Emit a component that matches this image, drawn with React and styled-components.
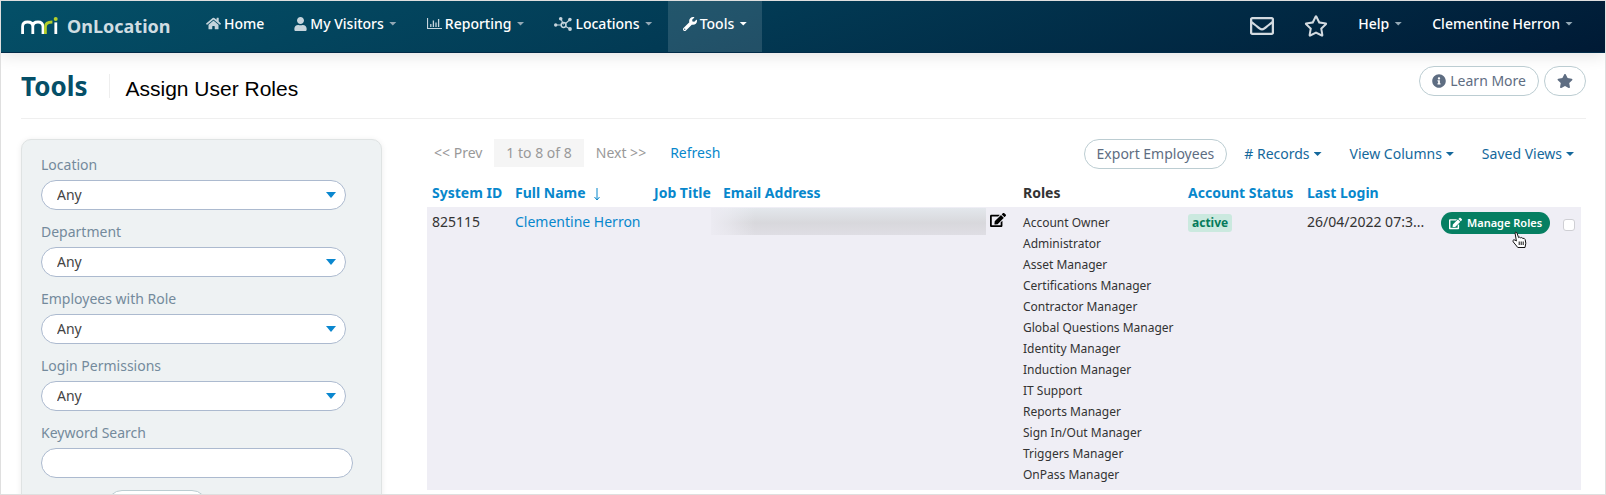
import React from "react";
import styled, { createGlobalStyle, css } from "styled-components";
import {
  FaHome,
  FaUser,
  FaWrench,
  FaRegEnvelope,
  FaRegStar,
  FaStar,
  FaInfoCircle,
  FaEdit,
} from "react-icons/fa";

const GlobalStyle = createGlobalStyle`
  *, *::before, *::after { box-sizing: border-box; }
  body {
    margin: 0;
    background: #fff;
    color: #333;
    font: 14px/20px "Noto Sans", "Open Sans", sans-serif;
  }
  button, input, select { font: inherit; }
  a { text-decoration: none; }
`;

const Page = styled.div`
  height: 100vh;
  overflow: hidden;
  border: 1px solid #dfdfdf;
`;

const NavBar = styled.header`
  display: flex;
  align-items: stretch;
  height: 52px;
  padding: 0 17px 0 20px;
  background: linear-gradient(160deg, #045068 0%, #023a54 45%, #001a35 100%);
  border-bottom: 1px solid #022c49;
  box-shadow: 0 2px 16px rgba(0, 0, 0, 0.12);
`;

const Brand = styled.a`
  display: flex;
  align-items: center;
  gap: 9px;
  width: 170px;
  padding-bottom: 2px;
  color: #d0dde2;
  font-size: 18px;
  font-weight: 700;
`;

const Menu = styled.nav`
  display: flex;
  flex: 1;
`;

const UserMenu = styled.div`
  display: flex;
`;

const NavItem = styled.button`
  display: flex;
  align-items: center;
  gap: 3px;
  padding: 0 15px 6px;
  border: 0;
  color: #fff;
  font-weight: 500;
  white-space: nowrap;
  background: ${(p) => (p.$active ? "rgba(255, 255, 255, 0.13)" : "transparent")};
  svg { color: ${(p) => (p.$active ? "#fff" : "#c6d4dc")}; }
`;

const UserIcon = styled(FaUser)`
  width: 13px;
  height: 14px;
`;

const IconLink = styled.a`
  display: flex;
  align-items: center;
  padding: 0 15px 2px;
  color: #d3dae0;
`;

const Caret = styled.span`
  width: 8px;
  height: 4px;
  margin-left: ${(p) => p.$gap || 0}px;
  background: ${(p) => p.$color || "#93a8b5"};
  clip-path: polygon(0 0, 100% 0, 50% 100%);
`;

const TitleBar = styled.div`
  display: flex;
  align-items: center;
  margin: 0 19px 0 20px;
  height: 66px;
  border-bottom: 1px solid #efefef;
`;

const Section = styled.h1`
  margin: 0;
  padding-right: 22px;
  border-right: 1px solid #eee;
  color: #054f68;
  font-size: 26px;
  line-height: 24px;
  font-weight: 700;
`;

const PageTitle = styled.h2`
  flex: 1;
  margin: 0;
  padding: 6px 0 0 15px;
  color: #000;
  font: 400 21px/24px "Liberation Sans", Arial, sans-serif;
`;

const Actions = styled.div`
  display: flex;
  gap: 5px;
  padding-bottom: 10px;
`;

const PillButton = styled.button`
  display: flex;
  align-items: center;
  justify-content: center;
  gap: 4px;
  height: 30px;
  padding: 0 12px;
  border: 1px solid #bccdd2;
  border-radius: 15px;
  background: #fff;
  color: #5e6d82;
  white-space: nowrap;
`;

const Body = styled.main`
  display: flex;
  align-items: flex-start;
  gap: 45px;
  padding: 20px 24px 0 20px;
`;

const Filters = styled.form`
  flex: 0 0 361px;
  padding: 15px 19px 24px;
  border: 1px solid #dfe3e3;
  border-radius: 10px;
  background: #eef2f3;
  box-shadow: 0 1px 6px rgba(0, 0, 0, 0.08);
`;

const Field = styled.div`
  display: flex;
  flex-direction: column;
  gap: 5px;
  margin-bottom: 12px;
  label { color: #748a9c; }
`;

const control = css`
  height: 30px;
  padding: 0 15px;
  border: 1px solid #acbacf;
  border-radius: 15px;
  background: #fff;
  color: #444;
`;

const SelectWrap = styled.div`
  display: grid;
  align-items: center;
  width: 305px;
  > * { grid-area: 1 / 1; }
  > span {
    justify-self: end;
    width: 10px;
    height: 6px;
    margin-right: 10px;
    background: #0a87cf;
    clip-path: polygon(0 0, 100% 0, 50% 100%);
    pointer-events: none;
  }
`;

const Select = styled.select`
  ${control}
  width: 100%;
  appearance: none;
`;

const TextInput = styled.input`
  ${control}
  width: 312px;
`;

const FilterActions = styled.div`
  display: flex;
  padding-left: 66px;
  button { width: 100px; }
`;

const Results = styled.section`
  flex: 1;
  min-width: 0;
`;

const Toolbar = styled.div`
  display: flex;
  align-items: center;
  justify-content: space-between;
  height: 30px;
`;

const Pager = styled.div`
  display: flex;
  align-items: center;
  gap: 12px;
  padding: 0 0 2px 7px;
  color: #999;
`;

const PageCount = styled.span`
  padding: 4px 12px;
  background: #f5f5f5;
`;

const BlueLink = styled.a`
  color: #0787cc;
  margin-left: ${(p) => p.$indent || 0}px;
`;

const DropTools = styled.div`
  display: flex;
  align-items: center;
  padding-right: 7px;
`;

const DropButton = styled.button`
  display: flex;
  align-items: center;
  gap: 4px;
  margin-left: ${(p) => p.$gap}px;
  padding: 0;
  border: 0;
  background: none;
  color: #14689c;
  white-space: nowrap;
`;

const Table = styled.table`
  width: 100%;
  margin-top: 9px;
  border-collapse: collapse;
  table-layout: fixed;
  th {
    padding: 5px 0 4px 5px;
    text-align: left;
    font-weight: 700;
    white-space: nowrap;
  }
  td {
    padding: 5px 0 0 5px;
    vertical-align: top;
    white-space: nowrap;
    background: #efeef5;
  }
`;

const SortArrow = styled.svg`
  margin-left: 7px;
  vertical-align: -3px;
`;

const EmailCell = styled.div`
  display: flex;
  gap: 4px;
  margin: -4px 0 0 -12px;
  button {
    display: flex;
    padding: 4px 0 0;
    border: 0;
    background: none;
    color: #000;
  }
`;

const Redacted = styled.span`
  flex: 0 0 275px;
  height: 27px;
  background:
    linear-gradient(90deg, #ecebf2 0, rgba(239, 238, 245, 0.6) 16px, transparent 44px),
    linear-gradient(#e3e7ec 0, #d8d8dc 55%, #dfdee4 100%);
`;

const RoleList = styled.ul`
  margin: 0;
  padding: 0 0 5px;
  list-style: none;
  font-size: 12px;
  line-height: 21px;
`;

const Status = styled.span`
  display: inline-block;
  padding: 0 4px;
  border-radius: 3px;
  background: #cbe9df;
  color: #057a5b;
  font-size: 12px;
  line-height: 18px;
  font-weight: 700;
`;

const ManageCell = styled.div`
  position: relative;
`;

const ManageButton = styled.button`
  display: flex;
  align-items: center;
  gap: 5px;
  height: 22px;
  padding: 0 8px;
  border: 0;
  border-radius: 11px;
  background: #067f62;
  color: #fff;
  font-size: 11px;
  font-weight: 600;
`;

const Pointer = styled.svg`
  position: absolute;
  left: 71px;
  top: 19px;
`;

const Check = styled.input`
  display: block;
  appearance: none;
  width: 12px;
  height: 12px;
  margin: 7px 0 0;
  border: 1px solid #cfcfd4;
  border-radius: 3px;
  background: #fff;
`;

const Logo = () => (
  <svg width="37" height="18" viewBox="0 0 37 18" fill="none" strokeWidth="2.8" role="img" aria-label="MRI">
    <path stroke="#fff" d="M1.6 17V9.5Q1.6 5 6.6 5Q11.8 5 11.8 9.5V17M11.8 9.5Q11.8 5 17 5Q21.6 5 22 9.5V17" />
    <path stroke="#b5cf2b" d="M24.4 17V10Q24.4 5 31.4 5" />
    <path stroke="#fff" d="M34.8 5.4V17" />
    <circle cx="34.7" cy="2" r="2" fill="#b5cf2b" />
  </svg>
);

const ChartIcon = () => (
  <svg width="15" height="12" viewBox="0 0 15 12" fill="none" stroke="currentColor">
    <path d="M.5 0V10.5H15" strokeWidth="1.2" />
    <path d="M3.8 9V6M6.4 9V2.5M9 9V4.5M11.6 9V1" strokeWidth="1.3" />
  </svg>
);

const NetworkIcon = () => (
  <svg width="18" height="14" viewBox="0 0 18 14" fill="currentColor">
    <path d="M2 8H7M7 2L9.5 7.5M11 7L15.5 3M11 9L16 12" stroke="currentColor" strokeWidth="1.1" />
    <circle cx="9.6" cy="8" r="2.4" fill="none" stroke="currentColor" strokeWidth="1.5" />
    <circle cx="1.7" cy="8" r="1.7" />
    <circle cx="6.7" cy="1.8" r="1.8" />
    <circle cx="15.9" cy="2.6" r="1.8" />
    <circle cx="16" cy="12" r="1.9" />
  </svg>
);

const menu = [
  { label: "Home", icon: <FaHome size={15} />, caret: false },
  { label: "My Visitors", icon: <UserIcon />, caret: true },
  { label: "Reporting", icon: <ChartIcon />, caret: true },
  { label: "Locations", icon: <NetworkIcon />, caret: true },
  { label: "Tools", icon: <FaWrench size={14} />, caret: true, active: true },
];

const filters = ["Location", "Department", "Employees with Role", "Login Permissions"];

const roles = [
  "Account Owner",
  "Administrator",
  "Asset Manager",
  "Certifications Manager",
  "Contractor Manager",
  "Global Questions Manager",
  "Identity Manager",
  "Induction Manager",
  "IT Support",
  "Reports Manager",
  "Sign In/Out Manager",
  "Triggers Manager",
  "OnPass Manager",
];

const columns = [83, 139, 69, 300, 165, 119, 134, 122, null];

export default function App() {
  return (
    <Page>
      <GlobalStyle />
      <NavBar>
        <Brand href="#">
          <Logo />
          OnLocation
        </Brand>
        <Menu>
          {menu.map((m) => (
            <NavItem key={m.label} type="button" $active={m.active}>
              {m.icon}
              {m.label}
              {m.caret && <Caret $gap={2} $color={m.active && "#fff"} />}
            </NavItem>
          ))}
        </Menu>
        <UserMenu>
          <IconLink href="#" aria-label="Messages"><FaRegEnvelope size={24} /></IconLink>
          <IconLink href="#" aria-label="Favourites"><FaRegStar size={24} /></IconLink>
          <NavItem type="button">Help<Caret $gap={2} /></NavItem>
          <NavItem type="button">Clementine Herron<Caret $gap={2} /></NavItem>
        </UserMenu>
      </NavBar>

      <TitleBar>
        <Section>Tools</Section>
        <PageTitle>Assign User Roles</PageTitle>
        <Actions>
          <PillButton type="button"><FaInfoCircle size={14} />Learn More</PillButton>
          <PillButton type="button" aria-label="Favourite this page"><FaStar size={16} /></PillButton>
        </Actions>
      </TitleBar>

      <Body>
        <Filters>
          {filters.map((f) => (
            <Field key={f}>
              <label htmlFor={f}>{f}</label>
              <SelectWrap>
                <Select id={f}><option>Any</option></Select>
                <span />
              </SelectWrap>
            </Field>
          ))}
          <Field>
            <label htmlFor="keyword">Keyword Search</label>
            <TextInput id="keyword" type="text" />
          </Field>
          <FilterActions>
            <PillButton type="submit" aria-label="Search" />
          </FilterActions>
        </Filters>

        <Results>
          <Toolbar>
            <Pager>
              <span>&lt;&lt; Prev</span>
              <PageCount>1 to 8 of 8</PageCount>
              <span>Next &gt;&gt;</span>
              <BlueLink href="#" $indent={12}>Refresh</BlueLink>
            </Pager>
            <DropTools>
              <PillButton type="button">Export Employees</PillButton>
              <DropButton type="button" $gap={17}># Records<Caret $color="#14689c" /></DropButton>
              <DropButton type="button" $gap={28}>View Columns<Caret $color="#14689c" /></DropButton>
              <DropButton type="button" $gap={28}>Saved Views<Caret $color="#14689c" /></DropButton>
            </DropTools>
          </Toolbar>
          <Table>
            <colgroup>
              {columns.map((w, i) => <col key={i} width={w || undefined} />)}
            </colgroup>
            <thead>
              <tr>
                <th><BlueLink href="#">System ID</BlueLink></th>
                <th>
                  <BlueLink href="#">
                    Full Name
                    <SortArrow width="8" height="14" viewBox="0 0 8 14" fill="none" stroke="currentColor">
                      <path d="M4 1V13M1.5 10L4 13L6.5 10" />
                    </SortArrow>
                  </BlueLink>
                </th>
                <th><BlueLink href="#">Job Title</BlueLink></th>
                <th><BlueLink href="#">Email Address</BlueLink></th>
                <th>Roles</th>
                <th><BlueLink href="#">Account Status</BlueLink></th>
                <th><BlueLink href="#">Last Login</BlueLink></th>
                <th />
                <th />
              </tr>
            </thead>
            <tbody>
              <tr>
                <td>825115</td>
                <td><BlueLink href="#">Clementine Herron</BlueLink></td>
                <td />
                <td>
                  <EmailCell>
                    <Redacted />
                    <button type="button" aria-label="Edit email"><FaEdit size={16} /></button>
                  </EmailCell>
                </td>
                <td>
                  <RoleList>{roles.map((r) => <li key={r}>{r}</li>)}</RoleList>
                </td>
                <td><Status>active</Status></td>
                <td>26/04/2022 07:3...</td>
                <td>
                  <ManageCell>
                    <ManageButton type="button"><FaEdit size={13} />Manage Roles</ManageButton>
                    <Pointer width="16" height="18" viewBox="0 0 16 18" fill="#fff" stroke="#111" strokeLinejoin="round" aria-hidden="true">
                      <path d="M3 1.8Q3.6.6 4.8 1.6L6.6 6.6Q7.6 5.6 8.6 6.8Q9.8 6 10.8 7.4Q12.4 6.8 13.2 8.6L13.8 12.2L13 16.5H5.8L1.2 10.8Q.4 9.2 1.8 8.8Q3 8.8 4.4 10Z" />
                      <path d="M7.2 10.5V14M9.2 10.5V14M11.2 10.5V14" />
                    </Pointer>
                  </ManageCell>
                </td>
                <td><Check type="checkbox" aria-label="Select Clementine Herron" /></td>
              </tr>
            </tbody>
          </Table>
        </Results>
      </Body>
    </Page>
  );
}
